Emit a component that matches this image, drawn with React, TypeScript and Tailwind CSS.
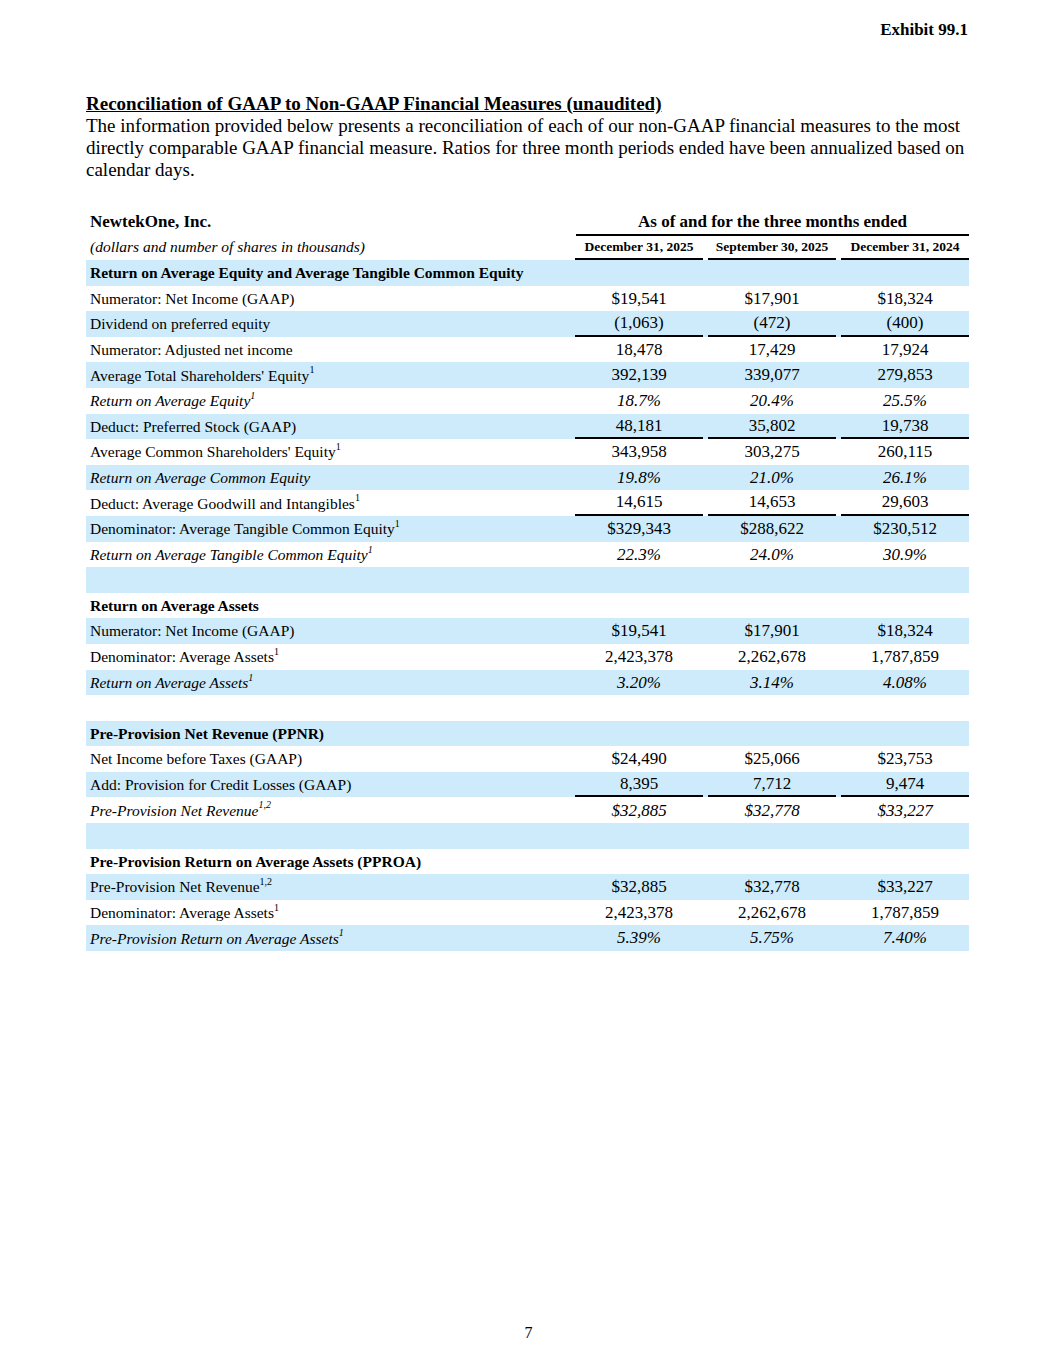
import React from "react";

type Row = {
  label?: React.ReactNode;
  vals?: string[];
  bg?: boolean;
  bold?: boolean;
  italic?: boolean;
  border?: boolean;
};

const S1 = () => <sup className="text-[10px] relative -top-[1px] align-super leading-none">1</sup>;
const S12 = () => <sup className="text-[10px] relative -top-[1px] align-super leading-none">1,2</sup>;

const rows: Row[] = [
  { label: "Return on Average Equity and Average Tangible Common Equity", bg: true, bold: true },
  { label: "Numerator: Net Income (GAAP)", vals: ["$19,541", "$17,901", "$18,324"] },
  { label: "Dividend on preferred equity", vals: ["(1,063)", "(472)", "(400)"], bg: true, border: true },
  { label: "Numerator: Adjusted net income", vals: ["18,478", "17,429", "17,924"] },
  { label: <>Average Total Shareholders' Equity<S1 /></>, vals: ["392,139", "339,077", "279,853"], bg: true },
  { label: <>Return on Average Equity<S1 /></>, vals: ["18.7%", "20.4%", "25.5%"], italic: true },
  { label: "Deduct: Preferred Stock (GAAP)", vals: ["48,181", "35,802", "19,738"], bg: true, border: true },
  { label: <>Average Common Shareholders' Equity<S1 /></>, vals: ["343,958", "303,275", "260,115"] },
  { label: "Return on Average Common Equity", vals: ["19.8%", "21.0%", "26.1%"], italic: true, bg: true },
  { label: <>Deduct: Average Goodwill and Intangibles<S1 /></>, vals: ["14,615", "14,653", "29,603"], border: true },
  { label: <>Denominator: Average Tangible Common Equity<S1 /></>, vals: ["$329,343", "$288,622", "$230,512"], bg: true },
  { label: <>Return on Average Tangible Common Equity<S1 /></>, vals: ["22.3%", "24.0%", "30.9%"], italic: true },
  { bg: true },
  { label: "Return on Average Assets", bold: true },
  { label: "Numerator: Net Income (GAAP)", vals: ["$19,541", "$17,901", "$18,324"], bg: true },
  { label: <>Denominator: Average Assets<S1 /></>, vals: ["2,423,378", "2,262,678", "1,787,859"] },
  { label: <>Return on Average Assets<S1 /></>, vals: ["3.20%", "3.14%", "4.08%"], italic: true, bg: true },
  {},
  { label: "Pre-Provision Net Revenue (PPNR)", bold: true, bg: true },
  { label: "Net Income before Taxes (GAAP)", vals: ["$24,490", "$25,066", "$23,753"] },
  { label: "Add: Provision for Credit Losses (GAAP)", vals: ["8,395", "7,712", "9,474"], bg: true, border: true },
  { label: <>Pre-Provision Net Revenue<S12 /></>, vals: ["$32,885", "$32,778", "$33,227"], italic: true },
  { bg: true },
  { label: "Pre-Provision Return on Average Assets (PPROA)", bold: true },
  { label: <>Pre-Provision Net Revenue<S12 /></>, vals: ["$32,885", "$32,778", "$33,227"], bg: true },
  { label: <>Denominator: Average Assets<S1 /></>, vals: ["2,423,378", "2,262,678", "1,787,859"] },
  { label: <>Pre-Provision Return on Average Assets<S1 /></>, vals: ["5.39%", "5.75%", "7.40%"], italic: true, bg: true },
];

export default function App() {
  return (
    <div
      className="w-[1055px] h-[1365px] bg-white text-black flex flex-col px-[86px] pt-[19px]"
      style={{ fontFamily: '"Liberation Serif", "Times New Roman", serif' }}
    >
      <div className="flex justify-end pr-[1px]">
        <span className="font-bold text-[17px] leading-[22px]">Exhibit 99.1</span>
      </div>

      <div className="mt-[52px] font-bold underline text-[19px] leading-[22px]">
        Reconciliation of GAAP to Non-GAAP Financial Measures (unaudited)
      </div>
      <div className="text-[19px] leading-[22px] pr-[4px]">
        The information provided below presents a reconciliation of each of our non-GAAP financial measures to the most
        directly comparable GAAP financial measure. Ratios for three month periods ended have been annualized based on
        calendar days.
      </div>

      <div className="mt-[29px] flex flex-col">
        <div className="flex h-[26px]">
          <div className="w-[490px] pl-[4px] font-bold text-[17px] leading-[24px]">NewtekOne, Inc.</div>
          <div className="flex-1 border-b-2 border-black text-center font-bold text-[17px] leading-[24px]">
            As of and for the three months ended
          </div>
        </div>
        <div className="flex h-[24px]">
          <div className="w-[490px] pl-[4px] italic text-[15.5px] leading-[22px] whitespace-nowrap">
            (dollars and number of shares in thousands)
          </div>
          <div className="flex gap-[5px]">
            {["December 31, 2025", "September 30, 2025", "December 31, 2024"].map((d) => (
              <div
                key={d}
                className="w-[128px] border-b-2 border-black text-center font-bold text-[13.5px] leading-[22px] whitespace-nowrap"
              >
                {d}
              </div>
            ))}
          </div>
        </div>

        {rows.map((r, i) => (
          <div key={i} className={`flex h-[25.6px] ${r.bg ? "bg-[#cdebfb]" : ""}`}>
            <div
              className={`w-[490px] pl-[4px] flex items-center text-[15.5px] whitespace-nowrap ${
                r.bold ? "font-bold" : ""
              } ${r.italic ? "italic" : ""}`}
            >
              <span>{r.label}</span>
            </div>
            <div className="flex gap-[5px]">
              {[0, 1, 2].map((j) => (
                <div
                  key={j}
                  className={`w-[128px] flex items-center justify-center text-[17px] ${
                    r.italic ? "italic" : ""
                  } ${r.border ? "border-b-2 border-black" : ""}`}
                >
                  {r.vals ? r.vals[j] : ""}
                </div>
              ))}
            </div>
          </div>
        ))}
      </div>

      <div className="flex-1" />
      <div className="flex justify-center pb-[22px] pl-[2px]">
        <span className="text-[16px] leading-[20px]">7</span>
      </div>
    </div>
  );
}
